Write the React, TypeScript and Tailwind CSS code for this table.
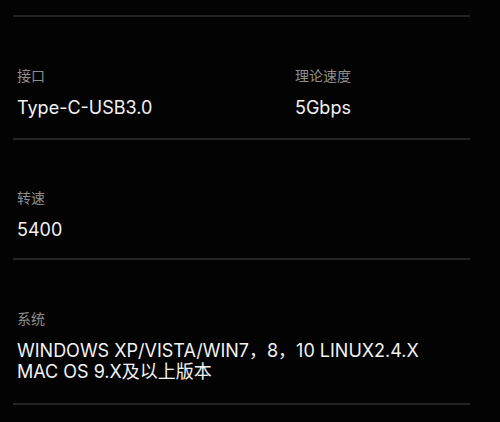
export default function App() {
  const font = { fontFamily: '"Inter", "Noto Sans CJK SC", sans-serif' };
  return (
    <div className="h-[422px] w-[500px] overflow-hidden bg-[#030303] pt-[15px]" style={font}>
      <div className="ml-[13px] w-[457px]">
        <div className="h-[2px] bg-[#242424]" />
        <div className="flex pb-[20px] pl-[4px] pt-[51px]">
          <div className="w-[278px]">
            <div className="text-[14px] leading-[16px] text-[#8e8e8e]">接口</div>
            <div className="mt-[13px] text-[18px] leading-[21px] text-[#f2f2f2]">Type-C-USB3.0</div>
          </div>
          <div>
            <div className="text-[14px] leading-[16px] text-[#8e8e8e]">理论速度</div>
            <div className="mt-[13px] text-[18px] leading-[21px] text-[#f2f2f2]">5Gbps</div>
          </div>
        </div>
        <div className="h-[2px] bg-[#242424]" />
        <div className="pb-[18px] pl-[4px] pt-[50px]">
          <div className="text-[14px] leading-[16px] text-[#8e8e8e]">转速</div>
          <div className="mt-[13px] text-[18px] leading-[21px] text-[#f2f2f2]">5400</div>
        </div>
        <div className="h-[2px] bg-[#242424]" />
        <div className="pb-[21px] pl-[4px] pt-[51px]">
          <div className="text-[14px] leading-[16px] text-[#8e8e8e]">系统</div>
          <div className="mt-[13px] text-[18px] leading-[21px] text-[#f2f2f2]">
            WINDOWS XP/VISTA/WIN7，8，10 LINUX2.4.X
            <br />
            MAC OS 9.X及以上版本
          </div>
        </div>
        <div className="h-[2px] bg-[#242424]" />
      </div>
    </div>
  );
}
